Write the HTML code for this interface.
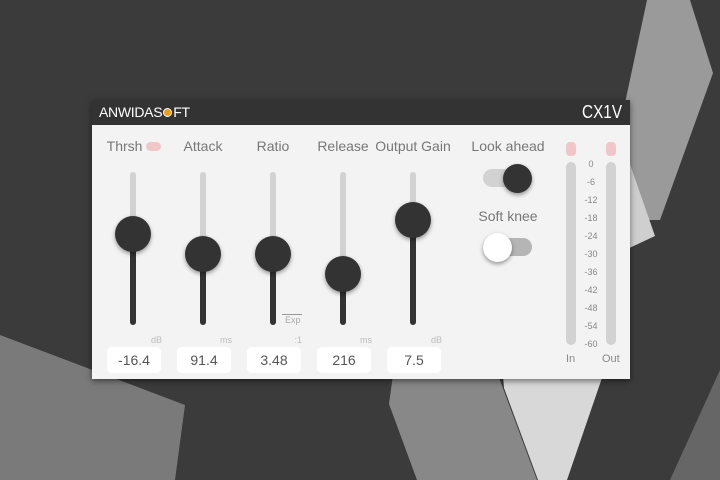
<!DOCTYPE html><html><head><style>
body{margin:0;width:720px;height:480px;overflow:hidden;background:#3b3b3b;font-family:"Liberation Sans",sans-serif;position:relative}
.abs{position:absolute}
.panel{left:92px;top:100px;width:538px;height:279px;background:#f3f3f3;box-shadow:0 2px 6px rgba(0,0,0,.5)}
.hdr{left:0;top:0;width:538px;height:25px;background:#333}
.lbl{color:#777;font-size:14px;text-align:center;width:100px}
.tr{width:6px;border-radius:3px}
.knob{width:36px;height:36px;border-radius:50%;background:#333;box-shadow:0 2px 4px rgba(0,0,0,.4)}
.box{width:54px;height:26px;background:#fff;border-radius:5px;text-align:center;line-height:26px;font-size:14px;color:#555}
.unit{font-size:9px;color:#bbb;width:50px;text-align:right}
.sc{font-size:9px;color:#888;width:24px;text-align:center}
</style></head><body>
<svg class="abs" style="left:0;top:0" width="720" height="480">
<polygon points="647,0 690,0 713,73 660,220 600,220" fill="#9a9a9a"/>
<polygon points="625,150 655,236 625,250" fill="#cfcfcf"/>
<polygon points="0,335 185,405 175,480 0,480" fill="#7a7a7a"/>
<polygon points="393,375 498,375 537,480 417,480 389,404" fill="#888"/>
<polygon points="503,375 603,375 567,480 538,480 504,388" fill="#d8d8d8"/>
<polygon points="720,370 720,480 670,480" fill="#666"/>
</svg>
<div class="abs panel">
<div class="abs hdr"></div>
<div class="abs" style="left:7px;top:4px;color:#fff;font-size:14px;letter-spacing:-0.3px">ANWIDAS<span style="display:inline-block;width:9px;height:9px;border-radius:50%;background:#f39c12;border:1px solid #fff;box-sizing:border-box;vertical-align:0px;margin:0 1px"></span>FT</div>
<div class="abs" style="right:8px;top:2px;color:#fff;font-size:18px;transform:scaleX(.85);transform-origin:right">CX1V</div>

<div class="abs lbl" style="left:-8px;top:38px">Thrsh <span style="display:inline-block;width:15px;height:9px;border-radius:5px;background:#f0c6c8;vertical-align:0"></span></div>
<div class="abs lbl" style="left:61px;top:38px">Attack</div>
<div class="abs lbl" style="left:131px;top:38px">Ratio</div>
<div class="abs lbl" style="left:201px;top:38px">Release</div>
<div class="abs lbl" style="left:271px;top:38px">Output Gain</div>
<div class="abs lbl" style="left:366px;top:38px">Look ahead</div>
<div class="abs lbl" style="left:366px;top:108px">Soft knee</div>

<div class="abs tr" style="left:38px;top:72px;height:153px;background:#d2d2d2"></div><div class="abs tr" style="left:38px;top:134px;height:91px;background:#333"></div><div class="abs knob" style="left:23px;top:116px"></div>
<div class="abs tr" style="left:108px;top:72px;height:153px;background:#d2d2d2"></div><div class="abs tr" style="left:108px;top:154px;height:71px;background:#333"></div><div class="abs knob" style="left:93px;top:136px"></div>
<div class="abs tr" style="left:178px;top:72px;height:153px;background:#d2d2d2"></div><div class="abs tr" style="left:178px;top:154px;height:71px;background:#333"></div><div class="abs knob" style="left:163px;top:136px"></div>
<div class="abs tr" style="left:248px;top:72px;height:153px;background:#d2d2d2"></div><div class="abs tr" style="left:248px;top:174px;height:51px;background:#333"></div><div class="abs knob" style="left:233px;top:156px"></div>
<div class="abs tr" style="left:318px;top:72px;height:153px;background:#d2d2d2"></div><div class="abs tr" style="left:318px;top:120px;height:105px;background:#333"></div><div class="abs knob" style="left:303px;top:102px"></div>
<div class="abs" style="left:190px;top:214px;width:20px;border-top:1px solid #999"></div>
<div class="abs" style="left:193px;top:215px;font-size:9px;color:#aaa">Exp</div>

<div class="abs unit" style="left:20px;top:235px">dB</div>
<div class="abs unit" style="left:90px;top:235px">ms</div>
<div class="abs unit" style="left:160px;top:235px">:1</div>
<div class="abs unit" style="left:230px;top:235px">ms</div>
<div class="abs unit" style="left:300px;top:235px">dB</div>
<div class="abs box" style="left:15px;top:247px">-16.4</div>
<div class="abs box" style="left:85px;top:247px">91.4</div>
<div class="abs box" style="left:155px;top:247px">3.48</div>
<div class="abs box" style="left:225px;top:247px">216</div>
<div class="abs box" style="left:295px;top:247px">7.5</div>

<div class="abs" style="left:391px;top:69px;width:49px;height:18px;border-radius:9px;background:#d2d2d2"></div>
<div class="abs knob" style="left:411px;top:64px;width:29px;height:29px"></div>
<div class="abs" style="left:391px;top:138px;width:49px;height:18px;border-radius:9px;background:#b5b5b5"></div>
<div class="abs knob" style="left:391px;top:133px;width:29px;height:29px;background:#fff"></div>

<div class="abs" style="left:474px;top:42px;width:10px;height:14px;border-radius:4px;background:#f0c6c8"></div>
<div class="abs" style="left:514px;top:42px;width:10px;height:14px;border-radius:4px;background:#f0c6c8"></div>
<div class="abs" style="left:474px;top:62px;width:10px;height:183px;border-radius:5px;background:#d2d2d2"></div>
<div class="abs" style="left:514px;top:62px;width:10px;height:183px;border-radius:5px;background:#d2d2d2"></div>
<div class="abs sc" style="left:487px;top:59px">0</div>
<div class="abs sc" style="left:487px;top:77px">-6</div>
<div class="abs sc" style="left:487px;top:95px">-12</div>
<div class="abs sc" style="left:487px;top:113px">-18</div>
<div class="abs sc" style="left:487px;top:131px">-24</div>
<div class="abs sc" style="left:487px;top:149px">-30</div>
<div class="abs sc" style="left:487px;top:167px">-36</div>
<div class="abs sc" style="left:487px;top:185px">-42</div>
<div class="abs sc" style="left:487px;top:203px">-48</div>
<div class="abs sc" style="left:487px;top:221px">-54</div>
<div class="abs sc" style="left:487px;top:239px">-60</div>
<div class="abs" style="left:474px;top:253px;font-size:11px;color:#888">In</div>
<div class="abs" style="left:510px;top:253px;font-size:11px;color:#888">Out</div>
</div>
</body></html>
